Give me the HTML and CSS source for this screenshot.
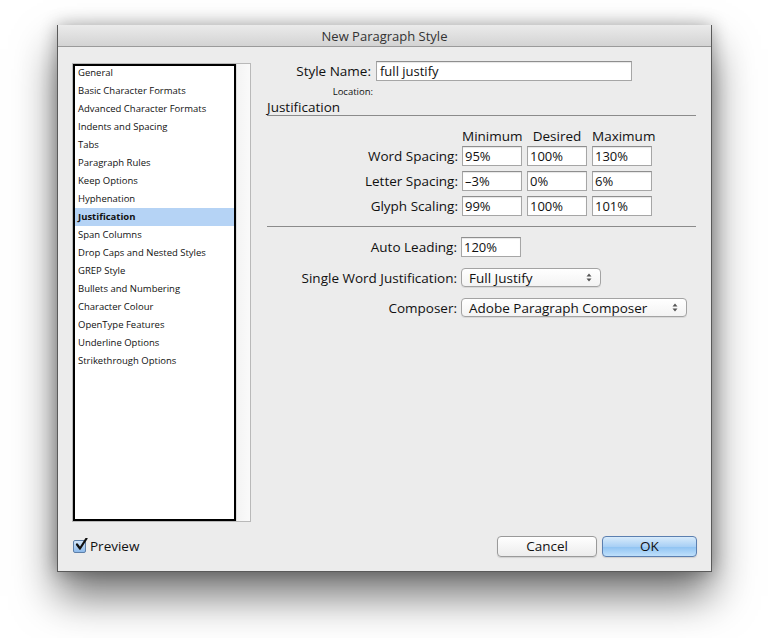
FILE: index.html
```html
<!DOCTYPE html>
<html>
<head>
<meta charset="utf-8">
<link rel="stylesheet" href="styles.css">
</head>
<body>
<div class="window">
  <div class="titlebar">New Paragraph Style</div>
  <div class="content">
    <div class="main">
      <div class="sidebar">
        <div class="listbox">
          <ul class="list">
            <li>General</li>
            <li>Basic Character Formats</li>
            <li>Advanced Character Formats</li>
            <li>Indents and Spacing</li>
            <li>Tabs</li>
            <li>Paragraph Rules</li>
            <li>Keep Options</li>
            <li>Hyphenation</li>
            <li class="selected">Justification</li>
            <li>Span Columns</li>
            <li>Drop Caps and Nested Styles</li>
            <li>GREP Style</li>
            <li>Bullets and Numbering</li>
            <li>Character Colour</li>
            <li>OpenType Features</li>
            <li>Underline Options</li>
            <li>Strikethrough Options</li>
          </ul>
          <div class="scrolltrack"></div>
        </div>
      </div>
      <div class="panel">
        <div class="name-row">
          <span class="label name-label">Style Name:</span>
          <div class="field name-field">full justify</div>
        </div>
        <div class="location-row">Location:</div>
        <div class="section-title">Justification</div>
        <div class="rule"></div>
        <div class="grid">
          <span></span>
          <span class="colhead">Minimum</span>
          <span class="colhead">Desired</span>
          <span class="colhead">Maximum</span>
          <span class="label">Word Spacing:</span>
          <div class="field">95%</div>
          <div class="field">100%</div>
          <div class="field">130%</div>
          <span class="label">Letter Spacing:</span>
          <div class="field">–3%</div>
          <div class="field">0%</div>
          <div class="field">6%</div>
          <span class="label">Glyph Scaling:</span>
          <div class="field">99%</div>
          <div class="field">100%</div>
          <div class="field">101%</div>
        </div>
        <div class="rule rule2"></div>
        <div class="form">
          <div class="row">
            <span class="label">Auto Leading:</span>
            <div class="field">120%</div>
          </div>
          <div class="row">
            <span class="label">Single Word Justification:</span>
            <div class="select sel-short">Full Justify<svg class="arrows" width="6" height="9" viewBox="0 0 6 9"><path d="M0.5 3.5 L3 0.5 L5.5 3.5 Z M0.5 5.5 L3 8.5 L5.5 5.5 Z" fill="#555"/></svg></div>
          </div>
          <div class="row">
            <span class="label">Composer:</span>
            <div class="select sel-long">Adobe Paragraph Composer<svg class="arrows" width="6" height="9" viewBox="0 0 6 9"><path d="M0.5 3.5 L3 0.5 L5.5 3.5 Z M0.5 5.5 L3 8.5 L5.5 5.5 Z" fill="#555"/></svg></div>
          </div>
        </div>
      </div>
    </div>
    <div class="footer">
      <label class="preview">
        <span class="checkbox"><svg width="14" height="14" viewBox="0 0 14 14"><path d="M3 6.5 L6 10.5 L12.5 0.5" fill="none" stroke="#111" stroke-width="2.2" stroke-linecap="round" stroke-linejoin="round"/></svg></span>
        Preview
      </label>
      <div class="buttons">
        <div class="btn">Cancel</div>
        <div class="btn ok">OK</div>
      </div>
    </div>
  </div>
</div>
</body>
</html>
```

FILE: styles.css
```css
html, body {
  margin: 0;
  padding: 0;
  background: #ffffff;
  width: 768px;
  height: 638px;
  overflow: hidden;
}
body {
  font-family: "Open Sans", "DejaVu Sans", sans-serif;
  color: #111;
}
.window {
  margin: 25px 0 0 57px;
  width: 655px;
  height: 547px;
  background: #ececec;
  border: 1px solid #5a5a5a;
  border-top: none;
  box-sizing: border-box;
  box-shadow: 0 24px 40px rgba(0,0,0,0.55), 0 0 16px rgba(0,0,0,0.3);
  display: flex;
  flex-direction: column;
}
.titlebar {
  height: 22px;
  line-height: 22px;
  text-align: center;
  font-size: 13px;
  color: #333;
  background: linear-gradient(#ebebeb, #d3d3d3);
  border-bottom: 1px solid #9a9a9a;
  border-radius: 4px 4px 0 0;
  box-sizing: border-box;
}
.content {
  flex: 1;
  display: flex;
  flex-direction: column;
  padding: 16px 14px 14px 14px;
}
.main {
  display: flex;
  gap: 16px;
  flex: 1;
}
.sidebar {
  width: 179px;
}
.listbox {
  display: flex;
  height: 459px;
  border: 1px solid #b9b9b9;
  box-sizing: border-box;
  background: #fff;
}
.list {
  list-style: none;
  margin: 0;
  padding: 0;
  width: 163px;
  border: 2px solid #000;
  box-sizing: border-box;
  font-size: 9.5px;
}
.list li {
  height: 18px;
  line-height: 18px;
  padding-left: 3px;
  white-space: nowrap;
}
.list li:first-child {
  margin-top: -2px;
}
.list li.selected {
  background: #b5d3f5;
  font-weight: bold;
}
.scrolltrack {
  flex: 1;
  background: linear-gradient(90deg, #f4f4f4, #fafafa);
  border-left: 1px solid #ddd;
}
.panel {
  flex: 1;
  display: flex;
  flex-direction: column;
  padding-right: 1px;
}
.label {
  font-size: 13.5px;
  text-align: right;
  white-space: nowrap;
}
.field {
  height: 20px;
  line-height: 19px;
  box-sizing: border-box;
  background: #fff;
  border: 1px solid #a6a6a6;
  border-top-color: #8e8e8e;
  box-shadow: inset 0 1px 1px rgba(0,0,0,0.1);
  font-size: 13px;
  padding-left: 2px;
  white-space: nowrap;
}
.name-row {
  display: flex;
  align-items: center;
  gap: 5px;
  margin-top: -2px;
}
.name-label {
  width: 104px;
}
.name-field {
  width: 256px;
  padding-left: 3px;
}
.location-row {
  margin-top: 5px;
  height: 12px;
  width: 106px;
  text-align: right;
  font-size: 9.5px;
  line-height: 12px;
}
.section-title {
  font-size: 13.5px;
  line-height: 17px;
  padding-top: 1px;
  margin-bottom: -1px;
}
.rule {
  height: 0;
  border-top: 1px solid #8b8b8b;
}
.grid {
  display: grid;
  grid-template-columns: 190px 60px 60px 60px;
  column-gap: 5px;
  row-gap: 5px;
  margin-top: 13px;
  align-items: center;
}
.colhead {
  font-size: 13.5px;
  text-align: center;
  line-height: 14px;
  margin-bottom: -2px;
}
.grid .label {
  margin-right: -1px;
}
.rule2 {
  margin-top: 10px;
}
.form {
  display: flex;
  flex-direction: column;
  gap: 11px;
  margin-top: 10px;
}
.row {
  display: flex;
  align-items: center;
  gap: 4px;
}
.row .label {
  width: 190px;
}
.row .field {
  width: 60px;
}
.select {
  position: relative;
  height: 19px;
  line-height: 18px;
  box-sizing: border-box;
  border: 1px solid #a3a3a3;
  border-radius: 4px;
  background: linear-gradient(#ffffff, #f3f3f3);
  box-shadow: 0 1px 0 rgba(0,0,0,0.08);
  font-size: 13.5px;
  padding-left: 7px;
}
.sel-short { width: 140px; }
.sel-long { width: 226px; }
.arrows {
  position: absolute;
  right: 8px;
  top: 4px;
}
.footer {
  display: flex;
  align-items: flex-end;
  justify-content: space-between;
  height: 32px;
}
.preview {
  display: flex;
  align-items: center;
  gap: 4px;
  font-size: 13.5px;
  margin-bottom: 2px;
  margin-left: 1px;
}
.checkbox {
  width: 13px;
  height: 13px;
  box-sizing: border-box;
  border: 1px solid #5d7fa8;
  border-radius: 2px;
  background: linear-gradient(#d3e6fa, #8cb9ea);
  position: relative;
}
.checkbox svg {
  position: absolute;
  left: 0px;
  top: -3px;
}
.buttons {
  display: flex;
  gap: 5px;
}
.btn {
  width: 100px;
  height: 21px;
  line-height: 19px;
  box-sizing: border-box;
  text-align: center;
  font-size: 13.5px;
  border: 1px solid #9a9a9a;
  border-radius: 4px;
  background: linear-gradient(#ffffff, #ececec);
  box-shadow: 0 1px 1px rgba(0,0,0,0.12);
}
.btn.ok {
  width: 95px;
  border-color: #5b7fb0;
  background: linear-gradient(#d8ebfb 0%, #a9d0f5 50%, #8ec2f2 51%, #bfe0fb 100%);
}
```
